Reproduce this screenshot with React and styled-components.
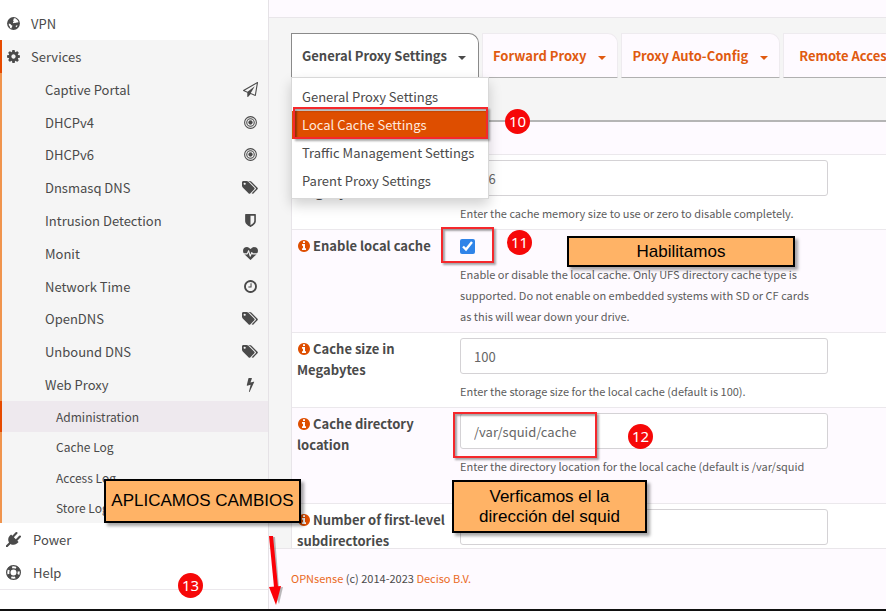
import React from "react";
import styled, { createGlobalStyle, css } from "styled-components";

const GlobalStyle = createGlobalStyle`
  *, *::before, *::after { box-sizing: border-box; }
  body {
    margin: 0;
    background: #fff;
    color: #4a4a4a;
    font-family: "Noto Sans CJK SC", "Open Sans", sans-serif;
    font-size: 13px;
    line-height: 21px;
  }
  a { color: inherit; text-decoration: none; }
  ul { list-style: none; margin: 0; padding: 0; }
  button, input { font: inherit; color: inherit; }
`;

/* ---------- icons ---------- */

const paths = {
  cog: "M1152 896q0-106-75-181t-181-75-181 75-75 181 75 181 181 75 181-75 75-181zm512-109v222q0 12-8 23t-20 13l-185 28q-19 54-39 91 35 50 107 138 10 12 10 25t-9 23q-27 37-99 108t-94 71q-12 0-26-9l-138-108q-44 23-91 38-16 136-29 186-7 28-36 28h-222q-14 0-24.5-8.5t-11.5-21.5l-28-184q-49-16-90-37l-141 107q-10 9-25 9-14 0-25-11-126-114-165-168-7-10-7-23 0-12 8-23 15-21 51-66.5t54-70.5q-27-50-41-99l-183-27q-13-2-21-12.5t-8-23.5v-222q0-12 8-23t19-13l186-28q14-46 39-92-40-57-107-138-10-12-10-24 0-10 9-23 26-36 98.5-107.5t94.5-71.5q13 0 26 10l138 107q44-23 91-38 16-136 29-186 7-28 36-28h222q14 0 24.5 8.5t11.5 21.5l28 184q49 16 90 37l142-107q9-9 24-9 13 0 25 10 129 119 165 170 7 8 7 22 0 12-8 23-15 21-51 66.5t-54 70.5q26 50 41 98l183 28q13 2 21 12.5t8 23.5z",
  tags: "M448 448q0-53-37.5-90.5t-90.5-37.5-90.5 37.5-37.5 90.5 37.5 90.5 90.5 37.5 90.5-37.5 37.5-90.5zm1067 576q0 53-37 90l-491 492q-39 37-91 37-53 0-90-37l-715-716q-38-37-64.5-101t-26.5-117v-416q0-52 38-90t90-38h416q53 0 117 26.5t102 64.5l715 714q37 39 37 91zm384 0q0 53-37 90l-491 492q-39 37-91 37-36 0-59-14t-53-45l470-470q37-37 37-90 0-52-37-91l-715-714q-38-38-102-64.5t-117-26.5h224q53 0 117 26.5t102 64.5l715 714q37 39 37 91z",
  info: "M1152 1376v-160q0-14-9-23t-23-9h-96v-512q0-14-9-23t-23-9h-320q-14 0-23 9t-9 23v160q0 14 9 23t23 9h96v320h-96q-14 0-23 9t-9 23v160q0 14 9 23t23 9h448q14 0 23-9t9-23zm-128-896v-160q0-14-9-23t-23-9h-192q-14 0-23 9t-9 23v160q0 14 9 23t23 9h192q14 0 23-9t9-23zm640 416q0 209-103 385.5t-279.5 279.5-385.5 103-385.5-103-279.5-279.5-103-385.5 103-385.5 279.5-279.5 385.5-103 385.5 103 279.5 279.5 103 385.5z",
  clock: "M1024 544v448q0 14-9 23t-23 9h-320q-14 0-23-9t-9-23v-64q0-14 9-23t23-9h224v-352q0-14 9-23t23-9h64q14 0 23 9t9 23zm416 352q0-148-73-273t-198-198-273-73-273 73-198 198-73 273 73 273 198 198 273 73 273-73 198-198 73-273zm224 0q0 209-103 385.5t-279.5 279.5-385.5 103-385.5-103-279.5-279.5-103-385.5 103-385.5 279.5-279.5 385.5-103 385.5 103 279.5 279.5 103 385.5z",
  bolt: "M1333 566q18 20 7 44l-540 1157q-13 25-42 25-4 0-14-2-17-5-25.5-19t-4.5-30l197-808-406 101q-4 1-12 1-18 0-31-11-18-15-13-39l201-825q4-14 16-23t28-9h328q19 0 32 12.5t13 29.5q0 8-5 18l-171 463 396-98q8-2 12-2 19 0 34 15z",
  shield: "M1344 960v-640h-448v1137q119-63 213-137 235-184 235-360zm192-768v768q0 86-33.5 170.5t-83 150-118 127.5-126.5 103-121 77.5-89.5 49.5-42.5 20q-12 6-26 6t-26-6q-16-7-42.5-20t-89.5-49.5-121-77.5-126.5-103-118-127.5-83-150-33.5-170.5v-768q0-26 19-45t45-19h1152q26 0 45 19t19 45z",
  plane: "M1764 11q33 24 27 64l-256 1536q-5 29-32 45-14 8-31 8-11 0-24-5l-527-215-298 327q-18 21-47 21-14 0-23-4-19-7-30-23.5t-11-36.5v-452l-472-193q-37-14-40-55-3-39 32-59l1664-960q35-21 68 2zm-342 1499l221-1323-1434 827 336 137 863-639-478 797z",
  plug: "M1755 453q37 38 37 90.5t-37 90.5l-401 400 150 150-160 160q-163 163-389.5 186.5t-411.5-100.5l-362 362h-181v-181l362-362q-124-185-100.5-411.5t186.5-389.5l160-160 150 150 400-401q38-37 91-37t90 37 37 90.5-37 90.5l-400 401 234 234 401-400q38-37 91-37t90 37z",
};

const drawings = {
  bullseye: (
    <g fill="none" stroke="currentColor" strokeWidth="128">
      <circle cx="896" cy="896" r="704" />
      <circle cx="896" cy="896" r="448" />
      <circle cx="896" cy="896" r="256" fill="currentColor" stroke="none" />
    </g>
  ),
  globe: (
    <>
      <circle cx="896" cy="896" r="768" />
      <g fill="#fff">
        <path d="M900 260l220 20 250 190 130 250-90 70-130-30-60 90-150-40-150 60-90-60 20-130 120-60-130-70 20-120 110-30z" />
        <path d="M330 900l190 60 130 140 130 60-70 150-80 170-130-60-60-200-100-120z" />
        <path d="M1180 1160l140-50 60 60-140 160-80-50z" />
      </g>
    </>
  ),
  heart: (
    <>
      <path d="M896 1664q-26 0-44-18l-624-602Q0 830 0 596q0-220 127-344t351-124q120 0 232 78t186 158q74-80 186-158t232-78q224 0 351 124t127 344q0 221-229 450l-623 600q-18 18-44 18z" />
      <path
        d="M0 940h500l170-380 190 660 190-440 100 160h642"
        fill="none"
        stroke="#f5f5f5"
        strokeWidth="130"
        strokeLinejoin="round"
      />
    </>
  ),
  ring: (
    <g fill="none" stroke="currentColor">
      <circle cx="896" cy="896" r="820" strokeWidth="150" />
      <circle cx="896" cy="896" r="430" strokeWidth="150" />
      <circle
        cx="896"
        cy="896"
        r="640"
        strokeWidth="420"
        strokeDasharray="502 503"
        strokeDashoffset="-251"
      />
    </g>
  ),
};

const Svg = styled.svg`
  display: inline-block;
  flex: none;
  fill: currentColor;
`;

function Icon({ name, size = 15 }) {
  const wide = name === "tags";
  return (
    <Svg
      width={wide ? size + 1 : size}
      height={size}
      viewBox={wide ? "0 0 1920 1792" : "0 0 1792 1792"}
      aria-hidden="true"
    >
      {drawings[name] || <path d={paths[name]} />}
    </Svg>
  );
}

/* ---------- page frame ---------- */

const Page = styled.div`
  position: relative;
  display: flex;
  height: 100vh;
  overflow: hidden;
  border-bottom: 2px solid #111;
`;

const Sidebar = styled.nav`
  flex: none;
  width: 269px;
  padding-top: 7px;
  border-right: 1px solid #e5e2e6;
  background: #fff;
`;

const TopLink = styled.a`
  display: flex;
  align-items: center;
  gap: ${(p) => (p.$wide ? "12px" : "10px")};
  height: ${(p) => (p.$fill ? "auto" : "33px")};
  flex: ${(p) => (p.$fill ? "1" : "none")};
  padding-left: ${(p) => (p.$fill ? "4px" : "6px")};
  border-left: ${(p) => (p.$fill ? "2px solid #e64a00" : "0")};
`;

const Group = styled.div`
  display: flex;
  flex-direction: column;
  min-height: 361px;
  background: #f5f5f5;
`;

const SubLink = styled.a`
  flex: 1;
  display: flex;
  align-items: center;
  justify-content: space-between;
  padding: 0 10px 0 43px;
  border-left: 2px solid #f0944d;
`;

const IconSlot = styled.span`
  display: flex;
  justify-content: center;
  width: 16px;
`;

const LeafGroup = styled.div`
  display: flex;
  flex-direction: column;
  min-height: 122px;
  background: #f5f5f5;
`;

const LeafLink = styled.a`
  flex: 1;
  display: flex;
  align-items: center;
  padding-left: 54px;
  font-size: 12px;
  border-left: 2px solid ${(p) => (p.$active ? "#e64a00" : "#f0944d")};
  background: ${(p) => (p.$active ? "#eee9ee" : "transparent")};
`;

const SidebarEnd = styled.div`
  border-top: 1px solid #ebe8ec;
`;

const Main = styled.main`
  flex: 1;
  min-width: 0;
  display: flex;
  flex-direction: column;
  background: #f5f5f5;
`;

const TopBar = styled.header`
  flex: none;
  height: 18px;
  background: #fefaff;
  border-bottom: 1px solid #e9e6ea;
`;

const Content = styled.section`
  flex: 1;
  min-height: 0;
  overflow: hidden;
  padding: 15px 0 0 22px;
`;

const Footer = styled.footer`
  flex: none;
  height: 61px;
  padding: 19px 22px;
  border-top: 1px solid #e9e6ea;
  background: #fefaff;
  font-size: 11px;
`;

const FooterLink = styled.a`
  color: #ea6a25;
`;

/* ---------- tabs ---------- */

const Tabs = styled.div`
  display: flex;
  gap: 3px;
`;

const Tab = styled.div`
  position: relative;
  flex: none;
  display: flex;
  height: 45px;
  border: 1px solid #eeebef;
  border-bottom: 1px solid #b0b0b0;
  border-radius: 0 10px 0 0;
  background: #fefaff;
  color: #e05a10;
  font-weight: 700;
  ${(p) =>
    p.$active &&
    css`
      border-color: #8a8a8a;
      border-bottom-color: #ddd;
      background: #fff;
      color: #4a4a4a;
    `}
`;

const TabLink = styled.a`
  display: flex;
  align-items: center;
  padding: 0 0 0 ${(p) => (p.$plain ? "15px" : "10px")};
  white-space: nowrap;
`;

const CaretButton = styled.button`
  width: 31px;
  padding: 1px 0 0;
  border: 0;
  background: none;

  &::before {
    content: "";
    display: inline-block;
    vertical-align: middle;
    border: 4px solid transparent;
    border-top-color: currentColor;
    border-bottom: 0;
  }
`;

const Menu = styled.ul`
  position: absolute;
  z-index: 2;
  top: 43px;
  left: -1px;
  width: 198px;
  padding: 5px 0 3px;
  border: 1px solid #d8d8d8;
  background: #fff;
  box-shadow: 0 6px 12px rgba(0, 0, 0, 0.18);
  color: #4a4a4a;
  font-weight: 400;
`;

const MenuLink = styled.a`
  display: block;
  padding: 0 10px;
  line-height: 28px;
  white-space: nowrap;
  background: ${(p) => (p.$active ? "#de4e00" : "transparent")};
  color: ${(p) => (p.$active ? "#ffe9de" : "inherit")};
`;

/* ---------- form ---------- */

const Form = styled.form`
  margin-top: 42px;
  border-top: 2px solid #b5b5b5;
  border-left: 1px solid #e8e5e9;
`;

const FormHead = styled.div`
  height: 32px;
  background: #fefaff;
`;

const FormRow = styled.div`
  display: grid;
  grid-template-columns: 168px minmax(0, 368px);
  padding: 5px 0;
  border-top: 1px solid #ebe8ec;
  background: ${(p) => (p.$tinted ? "#fefaff" : "#fff")};
`;

const Label = styled.label`
  padding: 0 5px;
  font-weight: 700;

  svg {
    vertical-align: -2px;
    margin-right: 2px;
    color: #de4e00;
  }
`;

const Field = styled.div`
  display: flex;
  flex-direction: column;
  gap: 7px;
`;

const TextInput = styled.input`
  width: 100%;
  height: 36px;
  padding: 0 13px;
  border: 1px solid #d4d2d5;
  border-radius: 3px;
  background: #fff;
  color: #666;
  outline: 0;
`;

const CheckLine = styled.div`
  display: flex;
  align-items: center;
  height: 22px;
`;

const Checkbox = styled.input`
  width: 15px;
  height: 15px;
  margin: 0;
  accent-color: #2f84e8;
`;

const Help = styled.small`
  padding-right: 10px;
  font-size: 11px;
  color: #5c5c5c;
`;

/* ---------- annotations laid over the page ---------- */

const Over = styled.div`
  position: absolute;
  z-index: 5;
  left: ${(p) => p.$x}px;
  top: ${(p) => p.$y}px;
`;

const Step = styled(Over)`
  width: 25px;
  height: 25px;
  border-radius: 50%;
  background: #f60808;
  color: #fff;
  font: 15px/25px "Noto Sans", sans-serif;
  text-align: center;
`;

const Note = styled(Over)`
  display: flex;
  align-items: center;
  justify-content: center;
  width: ${(p) => p.$w}px;
  height: ${(p) => p.$h}px;
  border: 2px solid #000;
  background: #ffb366;
  box-shadow: 3px 3px 3px rgba(0, 0, 0, 0.35);
  color: #000;
  font: 17px/20px "Liberation Sans", Arial, sans-serif;
  text-align: center;
`;

const Frame = styled(Over)`
  width: ${(p) => p.$w}px;
  height: ${(p) => p.$h}px;
  border: 2px solid #f5282c;
  box-shadow: 2px 2px 2px rgba(0, 0, 0, 0.35), inset 2px 2px 2px rgba(0, 0, 0, 0.35);
`;

const services = [
  ["Captive Portal", "plane"],
  ["DHCPv4", "bullseye"],
  ["DHCPv6", "bullseye"],
  ["Dnsmasq DNS", "tags"],
  ["Intrusion Detection", "shield"],
  ["Monit", "heart"],
  ["Network Time", "clock"],
  ["OpenDNS", "tags"],
  ["Unbound DNS", "tags"],
  ["Web Proxy", "bolt"],
];

const leaves = ["Administration", "Cache Log", "Access Log", "Store Log"];

const menu = [
  "General Proxy Settings",
  "Local Cache Settings",
  "Traffic Management Settings",
  "Parent Proxy Settings",
];

const fields = [
  {
    id: "memory",
    label: "Memory Cache size in Megabytes",
    value: "256",
    help: "Enter the cache memory size to use or zero to disable completely.",
  },
  {
    id: "enable",
    label: "Enable local cache",
    check: true,
    help: "Enable or disable the local cache. Only UFS directory cache type is supported. Do not enable on embedded systems with SD or CF cards as this will wear down your drive.",
  },
  {
    id: "size",
    label: "Cache size in Megabytes",
    value: "100",
    help: "Enter the storage size for the local cache (default is 100).",
  },
  {
    id: "directory",
    label: "Cache directory location",
    value: "/var/squid/cache",
    help: "Enter the directory location for the local cache (default is /var/squid /cache).",
  },
  {
    id: "levels",
    label: "Number of first-level subdirectories",
    value: "",
  },
];

export default function App() {
  return (
    <Page>
      <GlobalStyle />
      <Sidebar>
        <TopLink href="#vpn">
          <Icon name="globe" />
          VPN
        </TopLink>
        <Group>
          <TopLink href="#services" $fill>
            <Icon name="cog" />
            Services
          </TopLink>
          {services.map(([name, icon]) => (
            <SubLink href="#service" key={name}>
              {name}
              <IconSlot>
                <Icon name={icon} />
              </IconSlot>
            </SubLink>
          ))}
        </Group>
        <LeafGroup>
          {leaves.map((name, i) => (
            <LeafLink href="#leaf" key={name} $active={i === 0}>
              {name}
            </LeafLink>
          ))}
        </LeafGroup>
        <TopLink href="#power" $wide>
          <Icon name="plug" />
          Power
        </TopLink>
        <TopLink href="#help" $wide>
          <Icon name="ring" />
          Help
        </TopLink>
        <SidebarEnd />
      </Sidebar>

      <Main>
        <TopBar />
        <Content>
          <Tabs>
            <Tab $active>
              <TabLink href="#general">General Proxy Settings</TabLink>
              <CaretButton type="button" aria-label="Open general settings menu" />
              <Menu>
                {menu.map((name, i) => (
                  <li key={name}>
                    <MenuLink href="#section" $active={i === 1}>
                      {name}
                    </MenuLink>
                  </li>
                ))}
              </Menu>
            </Tab>
            <Tab>
              <TabLink href="#forward">Forward Proxy</TabLink>
              <CaretButton type="button" aria-label="Open forward proxy menu" />
            </Tab>
            <Tab>
              <TabLink href="#pac">Proxy Auto-Config</TabLink>
              <CaretButton type="button" aria-label="Open auto-config menu" />
            </Tab>
            <Tab>
              <TabLink href="#acl" $plain>
                Remote Access Control Lists
              </TabLink>
            </Tab>
          </Tabs>
          <Form>
            <FormHead />
            {fields.map((f, i) => (
              <FormRow key={f.id} $tinted={i % 2 === 1}>
                <Label htmlFor={f.id}>
                  <Icon name="info" size={14} />
                  {f.label}
                </Label>
                <Field>
                  {f.check ? (
                    <CheckLine>
                      <Checkbox id={f.id} type="checkbox" defaultChecked />
                    </CheckLine>
                  ) : (
                    <TextInput id={f.id} type="text" defaultValue={f.value} />
                  )}
                  {f.help && <Help>{f.help}</Help>}
                </Field>
              </FormRow>
            ))}
          </Form>
        </Content>
        <Footer>
          <FooterLink href="#opnsense">OPNsense</FooterLink> (c) 2014-2023{" "}
          <FooterLink href="#deciso">Deciso B.V.</FooterLink>
        </Footer>
      </Main>

      <Frame $x={293} $y={107} $w={195} $h={32} />
      <Frame $x={441} $y={227} $w={53} $h={36} />
      <Frame $x={453} $y={412} $w={144} $h={46} />
      <Note $x={104} $y={479} $w={197} $h={44}>
        APLICAMOS CAMBIOS
      </Note>
      <Note $x={567} $y={236} $w={228} $h={31}>
        Habilitamos
      </Note>
      <Note $x={452} $y={480} $w={195} $h={53}>
        Verficamos el la
        <br />
        dirección del squid
      </Note>
      <Step $x={505} $y={109}>10</Step>
      <Step $x={507} $y={230}>11</Step>
      <Step $x={628} $y={424}>12</Step>
      <Step $x={178} $y={573}>13</Step>
      <Over $x={264} $y={534}>
        <Svg width="24" height="76" viewBox="0 0 24 76" aria-hidden="true">
          <g fill="#777" opacity="0.5">
            <path d="M7 3h4l4 51h-4z" />
            <path d="M8 54l11-1-4 17z" />
          </g>
          <g fill="#fb0007">
            <path d="M5 2h4l5 51h-4z" />
            <path d="M5 53l12-1-5 19z" />
          </g>
        </Svg>
      </Over>
    </Page>
  );
}
